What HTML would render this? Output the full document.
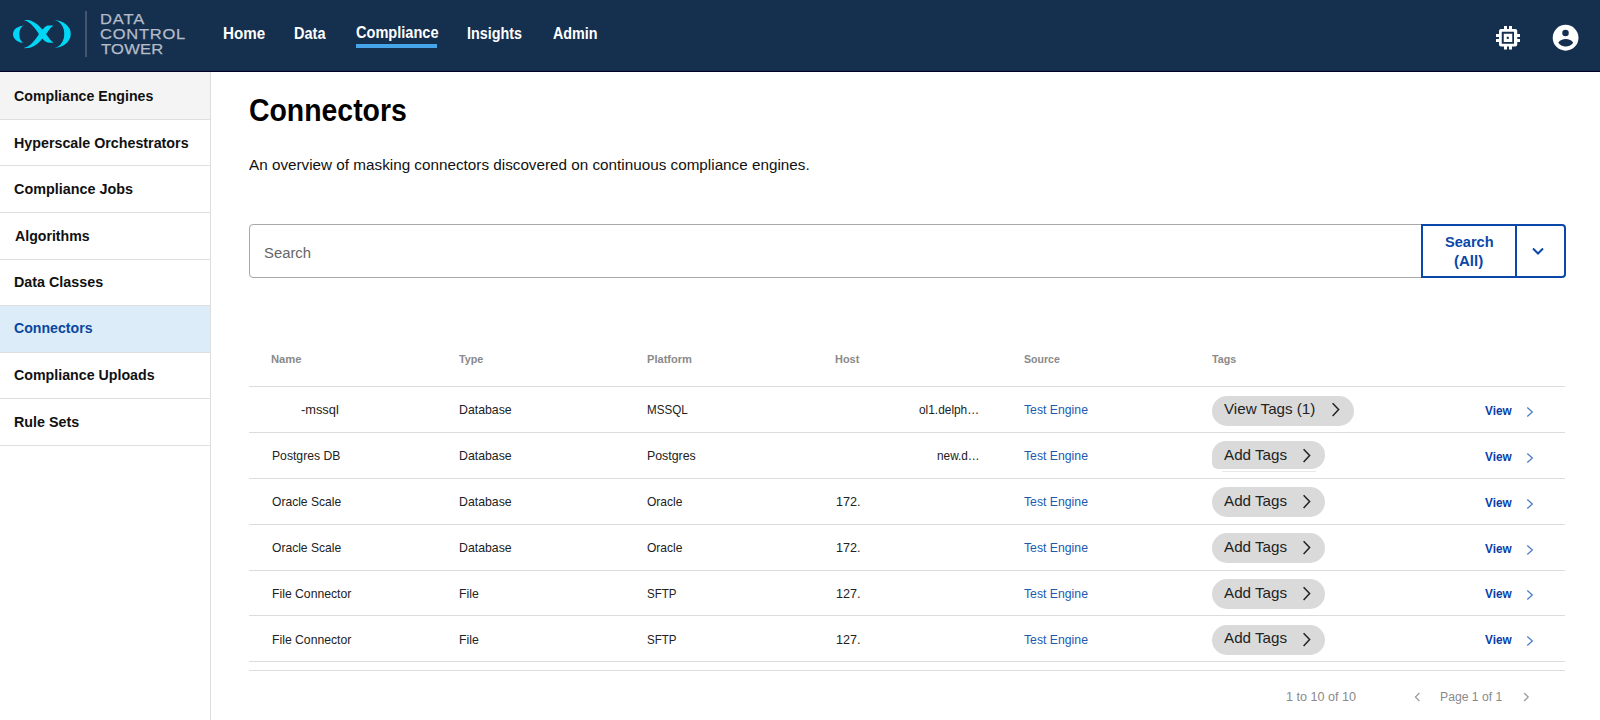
<!DOCTYPE html>
<html><head><meta charset="utf-8">
<style>
*{box-sizing:border-box;margin:0;padding:0}
html,body{width:1600px;height:720px;overflow:hidden;background:#fff;font-family:"Liberation Sans",sans-serif;color:#000}
.a{position:absolute;white-space:nowrap}
.t{position:absolute;white-space:nowrap;line-height:40px;height:40px}
</style></head><body>
<div class="a" style="left:0;top:0;width:1600px;height:71px;background:#152f4e"></div>
<div class="a" style="left:0;top:71px;width:1600px;height:1px;background:#00002a"></div>
<svg class="a" style="left:0;top:0" width="80" height="72" viewBox="0 0 80 72">
<path d="M24.5 25.5 A11.5 8.75 0 0 0 24.5 43 A5.2 8.75 0 0 1 24.5 25.5Z" fill="#00d7f6"/>
<path d="M24.30 20.20 C24.38 20.03 25.80 19.98 27.00 20.10 C28.20 20.22 30.12 20.43 31.50 20.90 C32.88 21.37 34.17 22.22 35.25 22.90 C36.33 23.58 37.17 24.28 38.00 25.00 C38.83 25.72 39.50 26.43 40.25 27.20 C41.00 27.97 41.77 28.80 42.50 29.60 C43.23 30.40 43.98 31.23 44.60 32.00 C45.22 32.77 45.63 33.40 46.20 34.20 C46.77 35.00 47.37 35.93 48.00 36.80 C48.63 37.67 49.30 38.60 50.00 39.40 C50.70 40.20 51.70 41.15 52.20 41.60 C52.70 42.05 52.93 41.92 53.00 42.10 C53.07 42.28 53.43 42.62 52.60 42.70 C51.77 42.78 49.27 42.85 48.00 42.60 C46.73 42.35 45.83 41.77 45.00 41.20 C44.17 40.63 43.67 39.90 43.00 39.20 C42.33 38.50 41.62 37.73 41.00 37.00 C40.38 36.27 39.80 35.55 39.30 34.80 C38.80 34.05 38.55 33.34 38.00 32.50 C37.45 31.66 36.75 30.71 36.00 29.75 C35.25 28.79 34.46 27.79 33.50 26.75 C32.54 25.71 31.42 24.44 30.25 23.50 C29.08 22.56 27.49 21.65 26.50 21.10 C25.51 20.55 24.22 20.37 24.30 20.20Z" fill="#00d7f6"/>
<path d="M24.30 20.20 C24.38 20.03 25.80 19.98 27.00 20.10 C28.20 20.22 30.12 20.43 31.50 20.90 C32.88 21.37 34.17 22.22 35.25 22.90 C36.33 23.58 37.17 24.28 38.00 25.00 C38.83 25.72 39.50 26.43 40.25 27.20 C41.00 27.97 41.77 28.80 42.50 29.60 C43.23 30.40 43.98 31.23 44.60 32.00 C45.22 32.77 45.63 33.40 46.20 34.20 C46.77 35.00 47.37 35.93 48.00 36.80 C48.63 37.67 49.30 38.60 50.00 39.40 C50.70 40.20 51.70 41.15 52.20 41.60 C52.70 42.05 52.93 41.92 53.00 42.10 C53.07 42.28 53.43 42.62 52.60 42.70 C51.77 42.78 49.27 42.85 48.00 42.60 C46.73 42.35 45.83 41.77 45.00 41.20 C44.17 40.63 43.67 39.90 43.00 39.20 C42.33 38.50 41.62 37.73 41.00 37.00 C40.38 36.27 39.80 35.55 39.30 34.80 C38.80 34.05 38.55 33.34 38.00 32.50 C37.45 31.66 36.75 30.71 36.00 29.75 C35.25 28.79 34.46 27.79 33.50 26.75 C32.54 25.71 31.42 24.44 30.25 23.50 C29.08 22.56 27.49 21.65 26.50 21.10 C25.51 20.55 24.22 20.37 24.30 20.20Z" fill="#00d7f6" transform="matrix(1 0 0 -1 0 68.2)"/>
<path d="M53 20 A17.75 14 0 0 1 53 48 A11.25 14 0 0 0 53 20Z" fill="#00d7f6"/>
</svg>
<div class="a" style="left:85px;top:11px;width:1.6px;height:46px;background:#46556e"></div>
<div class="a" style="left:356.3px;top:43.5px;width:81px;height:4px;background:#45a5e8"></div>
<svg class="a" style="left:1490px;top:20px" width="36" height="36" viewBox="0 0 36 36">
<rect x="9" y="9" width="18.25" height="17.5" rx="2" fill="#fff"/>
<rect x="11.75" y="11.75" width="12.25" height="12" fill="#152f4e"/>
<rect x="13.75" y="13.75" width="8.5" height="8.25" fill="#fff"/>
<rect x="16.75" y="16.75" width="2" height="2.25" fill="#152f4e"/>
<rect x="14" y="6" width="3" height="3.5" fill="#fff"/><rect x="19" y="6" width="3" height="3.5" fill="#fff"/>
<rect x="14" y="26" width="3" height="3.5" fill="#fff"/><rect x="19" y="26" width="3" height="3.5" fill="#fff"/>
<rect x="6" y="14" width="3.5" height="3" fill="#fff"/><rect x="6" y="19" width="3.5" height="3" fill="#fff"/>
<rect x="26.75" y="14" width="3.25" height="3" fill="#fff"/><rect x="26.75" y="19" width="3.25" height="3" fill="#fff"/>
</svg>
<svg class="a" style="left:1548px;top:20px" width="36" height="36" viewBox="0 0 36 36">
<circle cx="17.6" cy="17.75" r="12.9" fill="#fff"/>
<circle cx="17.5" cy="13" r="3.25" fill="#152f4e"/>
<path d="M10.3 22.8 C13 17.8 22.5 17.8 25.2 22.8 C22.5 27.6 13 27.6 10.3 22.8Z" fill="#152f4e"/>
</svg>
<div class="a" style="left:0;top:72px;width:210px;height:47.5px;background:#f4f4f4"></div>
<div class="a" style="left:0;top:305.3px;width:210px;height:46.8px;background:#dcecf9"></div>
<div class="a" style="left:0;top:119.0px;width:210px;height:1px;background:#dedede"></div>
<div class="a" style="left:0;top:165.3px;width:210px;height:1px;background:#dedede"></div>
<div class="a" style="left:0;top:212.0px;width:210px;height:1px;background:#dedede"></div>
<div class="a" style="left:0;top:258.7px;width:210px;height:1px;background:#dedede"></div>
<div class="a" style="left:0;top:304.8px;width:210px;height:1px;background:#dedede"></div>
<div class="a" style="left:0;top:351.6px;width:210px;height:1px;background:#dedede"></div>
<div class="a" style="left:0;top:397.9px;width:210px;height:1px;background:#dedede"></div>
<div class="a" style="left:0;top:445.0px;width:210px;height:1px;background:#dedede"></div>
<div class="a" style="left:210px;top:72px;width:1px;height:648px;background:#dedede"></div>
<div class="a" style="left:249px;top:224px;width:1174px;height:54px;border:1px solid #a8a8a8;border-radius:4px 0 0 4px"></div>
<div class="a" style="left:1421px;top:224px;width:145px;height:54px;border:2px solid #0a47a8;border-radius:0 4px 4px 0"></div>
<div class="a" style="left:1515px;top:224px;width:2px;height:54px;background:#0a47a8"></div>
<svg class="a" style="left:1530px;top:245px" width="16" height="12" viewBox="0 0 16 12"><path d="M3 3.5 L8 8.5 L13 3.5" stroke="#0a47a8" stroke-width="2" fill="none"/></svg>
<div class="a" style="left:249px;top:386px;width:1316px;height:1px;background:#dcdcdc"></div>
<div class="a" style="left:249px;top:432px;width:1316px;height:1px;background:#dcdcdc"></div>
<div class="a" style="left:249px;top:478px;width:1316px;height:1px;background:#dcdcdc"></div>
<div class="a" style="left:249px;top:524px;width:1316px;height:1px;background:#dcdcdc"></div>
<div class="a" style="left:249px;top:570px;width:1316px;height:1px;background:#dcdcdc"></div>
<div class="a" style="left:249px;top:615px;width:1316px;height:1px;background:#dcdcdc"></div>
<div class="a" style="left:249px;top:661px;width:1316px;height:1px;background:#dcdcdc"></div>
<div class="a" style="left:249px;top:670px;width:1316px;height:1px;background:#dcdcdc"></div>
<div class="a" style="left:1212px;top:395.5px;width:142px;height:30.5px;border-radius:15.25px;background:#dadada"></div>
<svg class="a" style="left:1330.00px;top:401.10px" width="12" height="18" viewBox="0 0 12 18"><path d="M2.6 2.3 L8.6 8.6 L2.6 14.9" stroke="#222" stroke-width="1.5" fill="none"/></svg>
<svg class="a" style="left:1525px;top:405.00px" width="10" height="14" viewBox="0 0 10 14"><path d="M2.3 2.4 L7.3 7 L2.3 11.6" stroke="#4d7fc9" stroke-width="1.3" fill="none"/></svg>
<div class="a" style="left:1212.25px;top:441.1px;width:113px;height:28px;border-radius:14px 14px 14px 6px;background:#dadada"></div>
<div class="a" style="left:1222px;top:470.8px;width:94px;height:1px;background:#e8e8e8"></div>
<svg class="a" style="left:1301.20px;top:446.70px" width="12" height="18" viewBox="0 0 12 18"><path d="M2.6 2.3 L8.6 8.6 L2.6 14.9" stroke="#222" stroke-width="1.5" fill="none"/></svg>
<svg class="a" style="left:1525px;top:450.87px" width="10" height="14" viewBox="0 0 10 14"><path d="M2.3 2.4 L7.3 7 L2.3 11.6" stroke="#4d7fc9" stroke-width="1.3" fill="none"/></svg>
<div class="a" style="left:1212.25px;top:487.4px;width:113px;height:30px;border-radius:15px;background:#dadada"></div>
<svg class="a" style="left:1301.20px;top:493.00px" width="12" height="18" viewBox="0 0 12 18"><path d="M2.6 2.3 L8.6 8.6 L2.6 14.9" stroke="#222" stroke-width="1.5" fill="none"/></svg>
<svg class="a" style="left:1525px;top:496.74px" width="10" height="14" viewBox="0 0 10 14"><path d="M2.3 2.4 L7.3 7 L2.3 11.6" stroke="#4d7fc9" stroke-width="1.3" fill="none"/></svg>
<div class="a" style="left:1212.25px;top:533.1px;width:113px;height:30px;border-radius:15px;background:#dadada"></div>
<svg class="a" style="left:1301.20px;top:538.70px" width="12" height="18" viewBox="0 0 12 18"><path d="M2.6 2.3 L8.6 8.6 L2.6 14.9" stroke="#222" stroke-width="1.5" fill="none"/></svg>
<svg class="a" style="left:1525px;top:542.61px" width="10" height="14" viewBox="0 0 10 14"><path d="M2.3 2.4 L7.3 7 L2.3 11.6" stroke="#4d7fc9" stroke-width="1.3" fill="none"/></svg>
<div class="a" style="left:1212.25px;top:579.4px;width:113px;height:30px;border-radius:15px;background:#dadada"></div>
<svg class="a" style="left:1301.20px;top:585.00px" width="12" height="18" viewBox="0 0 12 18"><path d="M2.6 2.3 L8.6 8.6 L2.6 14.9" stroke="#222" stroke-width="1.5" fill="none"/></svg>
<svg class="a" style="left:1525px;top:588.48px" width="10" height="14" viewBox="0 0 10 14"><path d="M2.3 2.4 L7.3 7 L2.3 11.6" stroke="#4d7fc9" stroke-width="1.3" fill="none"/></svg>
<div class="a" style="left:1212.25px;top:625.1px;width:113px;height:30px;border-radius:15px;background:#dadada"></div>
<svg class="a" style="left:1301.20px;top:630.70px" width="12" height="18" viewBox="0 0 12 18"><path d="M2.6 2.3 L8.6 8.6 L2.6 14.9" stroke="#222" stroke-width="1.5" fill="none"/></svg>
<svg class="a" style="left:1525px;top:634.35px" width="10" height="14" viewBox="0 0 10 14"><path d="M2.3 2.4 L7.3 7 L2.3 11.6" stroke="#4d7fc9" stroke-width="1.3" fill="none"/></svg>
<svg class="a" style="left:1412px;top:691px" width="10" height="12" viewBox="0 0 10 12"><path d="M7.4 2 L3.4 6 L7.4 10" stroke="#999" stroke-width="1.2" fill="none"/></svg>
<svg class="a" style="left:1522px;top:691px" width="10" height="12" viewBox="0 0 10 12"><path d="M2.2 2 L6.2 6 L2.2 10" stroke="#999" stroke-width="1.2" fill="none"/></svg>
<div class="t" style="left:100.25px;top:-1.25px;font-size:15.3px;font-weight:400;color:#b3bbc7;letter-spacing:0.830px;transform:scaleX(1.08);transform-origin:0 0;-webkit-text-stroke:0.25px #b3bbc7">DATA</div>
<div class="t" style="left:100.25px;top:13.75px;font-size:15.3px;font-weight:400;color:#b3bbc7;letter-spacing:0.677px;transform:scaleX(1.08);transform-origin:0 0;-webkit-text-stroke:0.25px #b3bbc7">CONTROL</div>
<div class="t" style="left:101.25px;top:29.2px;font-size:15.3px;font-weight:400;color:#b3bbc7;letter-spacing:0.251px;transform:scaleX(1.08);transform-origin:0 0;-webkit-text-stroke:0.25px #b3bbc7">TOWER</div>
<div class="t" style="left:222.6px;top:13px;font-size:16.3px;font-weight:700;color:#ffffff;transform:scaleX(0.932);transform-origin:0 0">Home</div>
<div class="t" style="left:293.5px;top:13px;font-size:16.3px;font-weight:700;color:#ffffff;transform:scaleX(0.8914);transform-origin:0 0">Data</div>
<div class="t" style="left:356.1px;top:11.5px;font-size:16.3px;font-weight:700;color:#ffffff;transform:scaleX(0.8945);transform-origin:0 0">Compliance</div>
<div class="t" style="left:467.4px;top:12.9px;font-size:16.3px;font-weight:700;color:#ffffff;transform:scaleX(0.882);transform-origin:0 0">Insights</div>
<div class="t" style="left:553.3px;top:13px;font-size:16.3px;font-weight:700;color:#ffffff;transform:scaleX(0.88);transform-origin:0 0">Admin</div>
<div class="t" style="left:14px;top:75.8px;font-size:15.3px;font-weight:700;color:#111111;transform:scaleX(0.9262);transform-origin:0 0">Compliance Engines</div>
<div class="t" style="left:14px;top:122.5px;font-size:15.3px;font-weight:700;color:#111111;transform:scaleX(0.9333);transform-origin:0 0">Hyperscale Orchestrators</div>
<div class="t" style="left:14px;top:169.2px;font-size:15.3px;font-weight:700;color:#111111;transform:scaleX(0.9392);transform-origin:0 0">Compliance Jobs</div>
<div class="t" style="left:15px;top:215.5px;font-size:15.3px;font-weight:700;color:#111111;transform:scaleX(0.925);transform-origin:0 0">Algorithms</div>
<div class="t" style="left:14px;top:262px;font-size:15.3px;font-weight:700;color:#111111;transform:scaleX(0.9362);transform-origin:0 0">Data Classes</div>
<div class="t" style="left:14px;top:308.25px;font-size:15.3px;font-weight:700;color:#0a47a0;transform:scaleX(0.9238);transform-origin:0 0">Connectors</div>
<div class="t" style="left:14px;top:355.3px;font-size:15.3px;font-weight:700;color:#111111;transform:scaleX(0.9293);transform-origin:0 0">Compliance Uploads</div>
<div class="t" style="left:14px;top:401.6px;font-size:15.3px;font-weight:700;color:#111111;transform:scaleX(0.9353);transform-origin:0 0">Rule Sets</div>
<div class="t" style="left:249px;top:89.6px;font-size:32px;font-weight:700;color:#000000;transform:scaleX(0.8875);transform-origin:0 0">Connectors</div>
<div class="t" style="left:249.4px;top:145px;font-size:15.3px;font-weight:400;color:#111111;transform:scaleX(0.9975);transform-origin:0 0">An overview of masking connectors discovered on continuous compliance engines.</div>
<div class="t" style="left:263.9px;top:232.5px;font-size:15.3px;font-weight:400;color:#666666;transform:scaleX(0.9703);transform-origin:0 0">Search</div>
<div class="t" style="left:1444.6px;top:221.9px;font-size:14.5px;font-weight:700;color:#0a47a8;transform:scaleX(1.0044);transform-origin:0 0">Search</div>
<div class="t" style="left:1454.3px;top:240.9px;font-size:14.5px;font-weight:700;color:#0a47a8;transform:scaleX(1.0374);transform-origin:0 0">(All)</div>
<div class="t" style="left:271.4px;top:339px;font-size:11.4px;font-weight:700;color:#8a8a8a;transform:scaleX(0.9868);transform-origin:0 0">Name</div>
<div class="t" style="left:459.4px;top:339px;font-size:11.4px;font-weight:700;color:#8a8a8a;transform:scaleX(0.9463);transform-origin:0 0">Type</div>
<div class="t" style="left:646.8px;top:339px;font-size:11.4px;font-weight:700;color:#8a8a8a;transform:scaleX(0.9733);transform-origin:0 0">Platform</div>
<div class="t" style="left:835.1px;top:339px;font-size:11.4px;font-weight:700;color:#8a8a8a;transform:scaleX(0.9588);transform-origin:0 0">Host</div>
<div class="t" style="left:1024.2px;top:339px;font-size:11.4px;font-weight:700;color:#8a8a8a;transform:scaleX(0.9264);transform-origin:0 0">Source</div>
<div class="t" style="left:1212.4px;top:339px;font-size:11.4px;font-weight:700;color:#8a8a8a;transform:scaleX(0.9393);transform-origin:0 0">Tags</div>
<div class="t" style="left:300.9px;top:390.25px;font-size:12.4px;font-weight:400;color:#222222;transform:scaleX(1.0343);transform-origin:0 0">-mssql</div>
<div class="t" style="left:458.6px;top:390.25px;font-size:12.4px;font-weight:400;color:#222222;transform:scaleX(0.9923);transform-origin:0 0">Database</div>
<div class="t" style="left:646.9px;top:390.25px;font-size:12.4px;font-weight:400;color:#222222;transform:scaleX(0.9381);transform-origin:0 0">MSSQL</div>
<div class="t" style="left:918.75px;top:390.25px;font-size:12.4px;font-weight:400;color:#222222;transform:scaleX(0.959);transform-origin:0 0">ol1.delph…</div>
<div class="t" style="left:1024.4px;top:390.25px;font-size:12.4px;font-weight:400;color:#1c5bb0;transform:scaleX(0.9875);transform-origin:0 0">Test Engine</div>
<div class="t" style="left:1485.25px;top:391.0px;font-size:12px;font-weight:700;color:#0a3ea8;transform:scaleX(0.9816);transform-origin:0 0">View</div>
<div class="t" style="left:1224px;top:389px;font-size:15px;font-weight:400;color:#222222;transform:scaleX(1.0113);transform-origin:0 0">View Tags (1)</div>
<div class="t" style="left:271.5px;top:436.12px;font-size:12.4px;font-weight:400;color:#222222;transform:scaleX(0.9824);transform-origin:0 0">Postgres DB</div>
<div class="t" style="left:458.6px;top:436.12px;font-size:12.4px;font-weight:400;color:#222222;transform:scaleX(0.9923);transform-origin:0 0">Database</div>
<div class="t" style="left:646.9px;top:436.12px;font-size:12.4px;font-weight:400;color:#222222;transform:scaleX(1.0);transform-origin:0 0">Postgres</div>
<div class="t" style="left:936.5px;top:436.12px;font-size:12.4px;font-weight:400;color:#222222;transform:scaleX(0.9524);transform-origin:0 0">new.d…</div>
<div class="t" style="left:1024.4px;top:436.12px;font-size:12.4px;font-weight:400;color:#1c5bb0;transform:scaleX(0.9875);transform-origin:0 0">Test Engine</div>
<div class="t" style="left:1485.25px;top:436.87px;font-size:12px;font-weight:700;color:#0a3ea8;transform:scaleX(0.9816);transform-origin:0 0">View</div>
<div class="t" style="left:1223.8px;top:434.9px;font-size:15px;font-weight:400;color:#222222;transform:scaleX(1.0129);transform-origin:0 0">Add Tags</div>
<div class="t" style="left:271.6px;top:481.99px;font-size:12.4px;font-weight:400;color:#222222;transform:scaleX(0.9744);transform-origin:0 0">Oracle Scale</div>
<div class="t" style="left:458.6px;top:481.99px;font-size:12.4px;font-weight:400;color:#222222;transform:scaleX(0.9923);transform-origin:0 0">Database</div>
<div class="t" style="left:646.9px;top:481.99px;font-size:12.4px;font-weight:400;color:#222222;transform:scaleX(0.9716);transform-origin:0 0">Oracle</div>
<div class="t" style="left:835.9px;top:481.99px;font-size:12.4px;font-weight:400;color:#222222;transform:scaleX(1.0183);transform-origin:0 0">172.</div>
<div class="t" style="left:1024.4px;top:481.99px;font-size:12.4px;font-weight:400;color:#1c5bb0;transform:scaleX(0.9875);transform-origin:0 0">Test Engine</div>
<div class="t" style="left:1485.25px;top:482.74px;font-size:12px;font-weight:700;color:#0a3ea8;transform:scaleX(0.9816);transform-origin:0 0">View</div>
<div class="t" style="left:1223.8px;top:480.77px;font-size:15px;font-weight:400;color:#222222;transform:scaleX(1.0129);transform-origin:0 0">Add Tags</div>
<div class="t" style="left:271.6px;top:527.86px;font-size:12.4px;font-weight:400;color:#222222;transform:scaleX(0.9744);transform-origin:0 0">Oracle Scale</div>
<div class="t" style="left:458.6px;top:527.86px;font-size:12.4px;font-weight:400;color:#222222;transform:scaleX(0.9923);transform-origin:0 0">Database</div>
<div class="t" style="left:646.9px;top:527.86px;font-size:12.4px;font-weight:400;color:#222222;transform:scaleX(0.9716);transform-origin:0 0">Oracle</div>
<div class="t" style="left:835.9px;top:527.86px;font-size:12.4px;font-weight:400;color:#222222;transform:scaleX(1.0183);transform-origin:0 0">172.</div>
<div class="t" style="left:1024.4px;top:527.86px;font-size:12.4px;font-weight:400;color:#1c5bb0;transform:scaleX(0.9875);transform-origin:0 0">Test Engine</div>
<div class="t" style="left:1485.25px;top:528.61px;font-size:12px;font-weight:700;color:#0a3ea8;transform:scaleX(0.9816);transform-origin:0 0">View</div>
<div class="t" style="left:1223.8px;top:526.64px;font-size:15px;font-weight:400;color:#222222;transform:scaleX(1.0129);transform-origin:0 0">Add Tags</div>
<div class="t" style="left:271.6px;top:573.73px;font-size:12.4px;font-weight:400;color:#222222;transform:scaleX(0.985);transform-origin:0 0">File Connector</div>
<div class="t" style="left:458.5px;top:573.73px;font-size:12.4px;font-weight:400;color:#222222;transform:scaleX(0.9899);transform-origin:0 0">File</div>
<div class="t" style="left:646.9px;top:573.73px;font-size:12.4px;font-weight:400;color:#222222;transform:scaleX(0.9336);transform-origin:0 0">SFTP</div>
<div class="t" style="left:835.9px;top:573.73px;font-size:12.4px;font-weight:400;color:#222222;transform:scaleX(1.0183);transform-origin:0 0">127.</div>
<div class="t" style="left:1024.4px;top:573.73px;font-size:12.4px;font-weight:400;color:#1c5bb0;transform:scaleX(0.9875);transform-origin:0 0">Test Engine</div>
<div class="t" style="left:1485.25px;top:574.48px;font-size:12px;font-weight:700;color:#0a3ea8;transform:scaleX(0.9816);transform-origin:0 0">View</div>
<div class="t" style="left:1223.8px;top:572.51px;font-size:15px;font-weight:400;color:#222222;transform:scaleX(1.0129);transform-origin:0 0">Add Tags</div>
<div class="t" style="left:271.6px;top:619.6px;font-size:12.4px;font-weight:400;color:#222222;transform:scaleX(0.985);transform-origin:0 0">File Connector</div>
<div class="t" style="left:458.5px;top:619.6px;font-size:12.4px;font-weight:400;color:#222222;transform:scaleX(0.9899);transform-origin:0 0">File</div>
<div class="t" style="left:646.9px;top:619.6px;font-size:12.4px;font-weight:400;color:#222222;transform:scaleX(0.9336);transform-origin:0 0">SFTP</div>
<div class="t" style="left:835.9px;top:619.6px;font-size:12.4px;font-weight:400;color:#222222;transform:scaleX(1.0183);transform-origin:0 0">127.</div>
<div class="t" style="left:1024.4px;top:619.6px;font-size:12.4px;font-weight:400;color:#1c5bb0;transform:scaleX(0.9875);transform-origin:0 0">Test Engine</div>
<div class="t" style="left:1485.25px;top:620.35px;font-size:12px;font-weight:700;color:#0a3ea8;transform:scaleX(0.9816);transform-origin:0 0">View</div>
<div class="t" style="left:1223.8px;top:618.38px;font-size:15px;font-weight:400;color:#222222;transform:scaleX(1.0129);transform-origin:0 0">Add Tags</div>
<div class="t" style="left:1285.6px;top:677px;font-size:12.5px;font-weight:400;color:#8a8a8a;transform:scaleX(1.0088);transform-origin:0 0">1 to 10 of 10</div>
<div class="t" style="left:1440.2px;top:677px;font-size:12.5px;font-weight:400;color:#8a8a8a;transform:scaleX(0.9747);transform-origin:0 0">Page 1 of 1</div>
</body></html>
